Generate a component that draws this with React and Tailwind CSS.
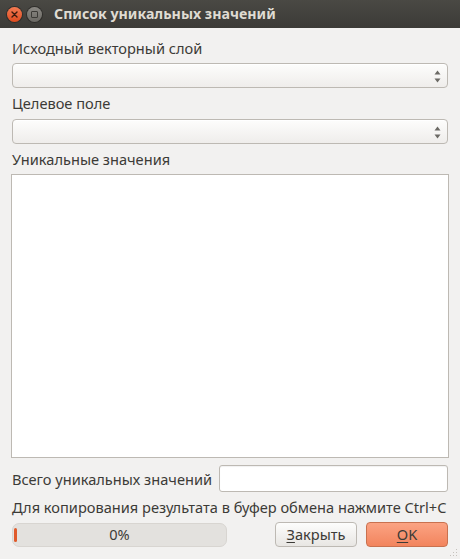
import React from 'react';

const font = { fontFamily: '"Noto Sans", "DejaVu Sans", sans-serif' };

const ComboBox = () => (
  <div className="relative h-[25px] rounded-[4px] border border-[#bdb9b3] bg-gradient-to-b from-[#fdfdfc] to-[#efedeb] shadow-[inset_0_1px_0_#ffffff]">
    <div className="absolute right-[6px] top-[6px] flex flex-col items-center gap-[3px]">
      <svg width="7" height="5" viewBox="0 0 7 5">
        <path d="M3.5 0.5 L6.5 4.5 L0.5 4.5 Z" fill="#6b6964" />
      </svg>
      <svg width="7" height="5" viewBox="0 0 7 5">
        <path d="M0.5 0.5 L6.5 0.5 L3.5 4.5 Z" fill="#6b6964" />
      </svg>
    </div>
  </div>
);

const TitleBar = () => (
  <div className="flex h-[28px] items-center bg-gradient-to-b from-[#4a4944] to-[#3c3b37] pl-[7px]">
    <div className="flex h-[15px] w-[15px] items-center justify-center rounded-full bg-gradient-to-b from-[#f37a51] to-[#df4a1c] shadow-[0_0_0_1px_#2f2e2b]">
      <svg width="7" height="7" viewBox="0 0 7 7">
        <path d="M1 1 L6 6 M6 1 L1 6" stroke="#3a1a0e" strokeWidth="1.4" strokeLinecap="round" />
      </svg>
    </div>
    <div className="ml-[5px] flex h-[15px] w-[15px] items-center justify-center rounded-full bg-gradient-to-b from-[#8a8883] to-[#6b6964] shadow-[0_0_0_1px_#2f2e2b]">
      <div className="h-[7px] w-[7px] rounded-[1px] border border-[#3c3b37]" />
    </div>
    <span className="ml-[12px] text-[14.2px] font-bold text-[#dfdbd2]">Список уникальных значений</span>
  </div>
);

// size grip dots in the bottom right corner
const SizeGrip = () => (
  <svg className="absolute bottom-[2px] right-[2px]" width="10" height="10" viewBox="0 0 10 10">
    {[[8, 2], [8, 5], [8, 8], [5, 5], [5, 8], [2, 8]].map(([x, y]) => (
      <rect key={`${x}-${y}`} x={x} y={y} width="1" height="1" fill="#c5c2bd" />
    ))}
  </svg>
);

export default function App() {
  return (
    <div className="relative h-[559px] w-[460px] overflow-hidden bg-[#f2f1f0] text-[#3c3b37]" style={font}>
      <TitleBar />
      <div className="flex h-[531px] flex-col px-[12px] pt-[8px] text-[14.6px]">
        <div className="leading-[24px]">Исходный векторный слой</div>
        <div className="mt-[3px]">
          <ComboBox />
        </div>
        <div className="mt-[3px] leading-[24px]">Целевое поле</div>
        <div className="mt-[4px]">
          <ComboBox />
        </div>
        <div className="mt-[3px] leading-[24px]">Уникальные значения</div>
        <div className="-mx-px mt-[3px] h-[284px] border border-[#bdb9b3] bg-white" />
        <div className="mt-[7px] flex items-center gap-[7px]">
          <span className="leading-[24px]">Всего уникальных значений</span>
          <div className="h-[27px] flex-1 rounded-[3px] border border-[#bdb9b3] bg-white shadow-[inset_0_1px_1px_rgba(0,0,0,0.06)]" />
        </div>
        <div className="mt-[3px] whitespace-nowrap leading-[24px]">
          Для копирования результата в буфер обмена нажмите Ctrl+C
        </div>
        <div className="mt-[3px] flex items-center">
          <div className="relative flex h-[24px] w-[215px] items-center justify-center rounded-[7px] border border-[#d8d5d1] bg-[#e3e1de]">
            <div className="absolute left-[1px] top-[4px] h-[14px] w-[3px] rounded-[2px] bg-[#e05a2b]" />
            <span>0%</span>
          </div>
          <div className="ml-auto flex gap-[9px]">
            <button className="h-[25px] w-[82px] rounded-[4px] border border-[#bdb9b3] bg-gradient-to-b from-[#fdfdfc] to-[#e8e6e3] text-[#3c3b37]">
              <span className="underline underline-offset-2">З</span>акрыть
            </button>
            <button className="h-[25px] w-[82px] rounded-[4px] border border-[#c9714f] bg-gradient-to-b from-[#fba383] to-[#f2845d] text-[#3c3b37]">
              <span className="underline underline-offset-2">O</span>K
            </button>
          </div>
        </div>
      </div>
      <SizeGrip />
    </div>
  );
}
